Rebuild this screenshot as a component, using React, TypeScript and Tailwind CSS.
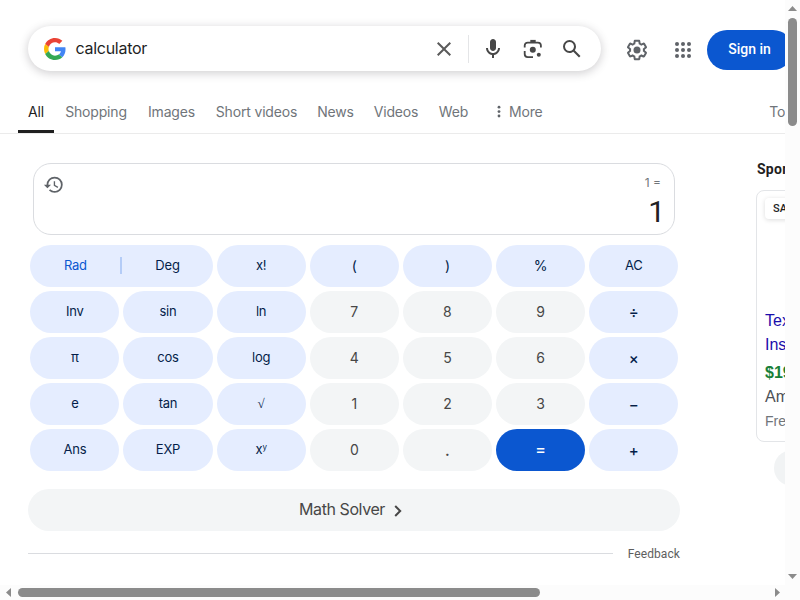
import type { ReactNode } from "react";

const GEAR =
  "M13.85 22.25h-3.7c-.74 0-1.36-.54-1.45-1.27l-.27-1.89c-.27-.14-.53-.29-.79-.46l-1.8.72c-.7.26-1.47-.03-1.81-.65L2.2 15.53c-.35-.66-.2-1.44.36-1.88l1.53-1.19c-.01-.15-.02-.3-.02-.46 0-.15.01-.31.02-.46l-1.52-1.19c-.59-.45-.74-1.26-.37-1.88l1.85-3.19c.34-.62 1.11-.9 1.79-.63l1.81.73c.26-.17.52-.32.78-.46l.27-1.91c.09-.7.71-1.25 1.44-1.25h3.7c.74 0 1.36.54 1.45 1.27l.27 1.89c.27.14.53.29.79.46l1.8-.72c.71-.26 1.48.03 1.82.65l1.84 3.18c.36.66.2 1.44-.36 1.88l-1.52 1.19c.01.15.02.3.02.46s-.01.31-.02.46l1.52 1.19c.56.45.72 1.23.37 1.86l-1.86 3.22c-.34.62-1.11.9-1.8.63l-1.8-.72c-.26.17-.52.32-.78.46l-.27 1.91c-.1.68-.72 1.22-1.46 1.22zm-3.23-2h2.76l.37-2.55.53-.22c.44-.18.88-.44 1.34-.78l.45-.34 2.38.96 1.38-2.4-2.03-1.58.07-.56c.03-.26.06-.51.06-.78s-.03-.53-.06-.78l-.07-.56 2.03-1.58-1.39-2.4-2.39.96-.45-.35c-.42-.32-.87-.58-1.33-.77l-.52-.22-.37-2.55h-2.76l-.37 2.55-.53.21c-.44.19-.88.44-1.34.79l-.45.33-2.38-.95-1.39 2.39 2.03 1.58-.07.56a7 7 0 0 0-.06.79c0 .26.02.53.06.78l.07.56-2.03 1.58 1.38 2.4 2.39-.96.45.35c.43.33.86.58 1.33.77l.53.22.38 2.55z";

function GoogleLogo() {
  return (
    <svg viewBox="0 0 48 48" className="ml-[15.5px] h-[22px] w-[22px] shrink-0">
      <path fill="#ea4335" d="M24 9.5c3.54 0 6.71 1.22 9.21 3.6l6.85-6.85C35.9 2.38 30.47 0 24 0 14.62 0 6.51 5.38 2.56 13.22l7.98 6.19C12.43 13.72 17.74 9.5 24 9.5z" />
      <path fill="#4285f4" d="M46.98 24.55c0-1.57-.15-3.09-.38-4.55H24v9.02h12.94c-.58 2.96-2.26 5.48-4.78 7.18l7.73 6c4.51-4.18 7.09-10.36 7.09-17.65z" />
      <path fill="#fbbc05" d="M10.53 28.59c-.48-1.45-.76-2.99-.76-4.59s.27-3.14.76-4.59l-7.98-6.19C.92 16.46 0 20.12 0 24c0 3.88.92 7.54 2.56 10.78l7.97-6.19z" />
      <path fill="#34a853" d="M24 48c6.48 0 11.93-2.13 15.89-5.81l-7.73-6c-2.15 1.45-4.92 2.3-8.16 2.3-6.26 0-11.57-4.22-13.47-9.91l-7.98 6.19C6.51 42.62 14.62 48 24 48z" />
    </svg>
  );
}

function SearchBar() {
  return (
    <div className="flex h-[45px] w-[573px] shrink-0 items-center rounded-full bg-white shadow-[0_2px_8px_1px_rgba(64,60,67,0.22)]">
      <GoogleLogo />
      <span className="ml-[10px] w-[356.5px] pb-[2px] text-[16px] tracking-[-0.28px] text-[#1f1f1f]">calculator</span>
      <svg viewBox="0 0 24 24" className="h-6 w-6 shrink-0 fill-[#5a5a5a]">
        <path d="M19 6.41L17.59 5 12 10.59 6.41 5 5 6.41 10.59 12 5 17.59 6.41 19 12 13.41 17.59 19 19 17.59 13.41 12z" />
      </svg>
      <div className="ml-3 h-7 w-px bg-[#e4e5e7]" />
      <svg viewBox="0 0 24 24" className="ml-[11.5px] h-6 w-6 shrink-0 fill-[#474747]">
        <path d="M12 14c1.66 0 3-1.34 3-3V5c0-1.66-1.34-3-3-3S9 3.34 9 5v6c0 1.66 1.34 3 3 3z" />
        <path d="M17 11c0 2.76-2.24 5-5 5s-5-2.24-5-5H5c0 3.53 2.61 6.43 6 6.92V21h2v-3.08c3.39-.49 6-3.39 6-6.92h-2z" />
      </svg>
      <svg viewBox="0 0 24 24" className="ml-4 h-6 w-6 shrink-0 fill-[#474747]">
        <path d="M9.3 2.9h5.4v2.4H9.3z" />
        <path
          d="M3.7 10.6V8.6a3 3 0 0 1 3-3h10.2a3 3 0 0 1 3 3v2M3.7 14v3.1a3 3 0 0 0 3 3H12"
          fill="none"
          stroke="#474747"
          strokeWidth="1.8"
        />
        <circle cx="11.8" cy="12.8" r="3" />
        <circle cx="17.8" cy="17.8" r="2" />
      </svg>
      <svg viewBox="0 0 24 24" className="ml-[15.5px] h-6 w-6 shrink-0 fill-[#474747]">
        <path d="M20.49 19l-5.73-5.73C15.53 12.2 16 10.91 16 9.5A6.5 6.5 0 1 0 9.5 16c1.41 0 2.7-.47 3.77-1.24L19 20.49 20.49 19zM5 9.5C5 7.01 7.01 5 9.5 5S14 7.01 14 9.5 11.99 14 9.5 14 5 11.99 5 9.5z" />
      </svg>
    </div>
  );
}

function Header() {
  return (
    <header className="flex h-[71px] items-start pt-[26px] pl-7">
      <SearchBar />
      <svg viewBox="0 0 24 24" className="mt-3 ml-6 h-6 w-6 shrink-0 fill-[#5f6368]">
        <path d={GEAR} />
        <circle cx="12" cy="12" r="3.5" />
      </svg>
      <svg viewBox="0 0 24 24" className="mt-3 ml-[22px] h-6 w-6 shrink-0 fill-[#5f6368]">
        {[6, 12, 18].map((y) => [6, 12, 18].map((x) => <circle key={x + "-" + y} cx={x} cy={y} r="2" />))}
      </svg>
      <button className="mt-1 ml-3 h-10 w-[86px] shrink-0 rounded-full bg-[#0b57d0] pr-[1px] pb-[2px] font-['Roboto',sans-serif] text-[14px] font-medium text-white">
        Sign in
      </button>
    </header>
  );
}

const tabs = [
  { label: "All", width: "w-9" },
  { label: "Shopping", width: "w-[83px]" },
  { label: "Images", width: "w-[68px]" },
  { label: "Short videos", width: "w-[102px]" },
  { label: "News", width: "w-[56px]" },
  { label: "Videos", width: "w-[65px]" },
  { label: "Web", width: "w-[50px]" },
];

function Tabs() {
  return (
    <nav className="flex h-[63px] border-b border-[#ebebeb] pl-[18px] text-[14px] tracking-[-0.17px] text-[#70757a]">
      {tabs.map((tab, i) => (
        <div
          key={tab.label}
          className={
            tab.width +
            " flex shrink-0 justify-center border-b-3 pt-[31px] leading-5 whitespace-nowrap " +
            (i === 0 ? "mr-[0.5px] border-[#1f1f1f] text-[#1f1f1f]" : "border-transparent")
          }
        >
          {tab.label}
        </div>
      ))}
      <div className="ml-[18.5px] flex pt-[31px] leading-5">
        <svg viewBox="0 0 4 14" className="mt-[3px] mr-2 h-[14px] w-1 fill-[#5f6368]">
          <circle cx="2" cy="2.2" r="1.4" />
          <circle cx="2" cy="6.6" r="1.4" />
          <circle cx="2" cy="11" r="1.4" />
        </svg>
        More
      </div>
      <div className="mr-[-19px] ml-auto pt-[31px] leading-5">Tools</div>
    </nav>
  );
}

function Display() {
  return (
    <div className="mr-[5px] ml-[5px] flex h-[72px] justify-between rounded-[18px] border border-[#dadce0]">
      <svg viewBox="0 0 24 24" className="mt-[9.5px] ml-[9px] h-[21.5px] w-[21.5px] fill-[#5f6368]">
        <path d="M13 3a9 9 0 0 0-9 9H1l3.89 3.89.07.14L9 12H6c0-3.87 3.13-7 7-7s7 3.13 7 7-3.13 7-7 7c-1.93 0-3.68-.79-4.94-2.06l-1.42 1.42A8.954 8.954 0 0 0 13 21a9 9 0 0 0 0-18zm-1 5v5l4.28 2.54.72-1.21-3.5-2.08V8H12z" />
      </svg>
      <div className="flex flex-col items-end pr-[13px]">
        <span className="mt-[11px] text-[12px] leading-4 text-[#70757a]">1 =</span>
        <span className="mt-[2px] mr-[-4px] font-['Roboto',sans-serif] text-[30px] leading-[38px] text-[#202124]">1</span>
      </div>
    </div>
  );
}

type Key = { label: ReactNode; kind: "fn" | "num" | "eq" | "op"; cls?: string };
const fn = (label: ReactNode, cls = "text-[13px] tracking-[-0.2px]"): Key => ({ label, kind: "fn", cls });
const op = (label: string): Key => ({ label, kind: "op", cls: "pt-[2px] text-[15px] font-medium" });
const num = (label: string): Key => ({ label, kind: "num", cls: "pb-[2px] text-[14px]" });

const keys: Key[] = [
  fn("x!"), fn("(", "text-[14px]"), fn(")", "text-[14px]"), fn("%", "text-[14px]"), fn("AC"),
  fn("Inv"), fn("sin"), fn("ln"), num("7"), num("8"), num("9"), op("÷"),
  fn("π"), fn("cos"), fn("log"), num("4"), num("5"), num("6"), op("×"),
  fn("e"), fn("tan"), fn("√", "text-[13px] font-['Liberation_Serif',serif]"), num("1"), num("2"), num("3"), op("−"),
  fn("Ans"), fn("EXP"),
  fn(<>x<span className="mb-[6px] text-[8px]">y</span></>),
  num("0"),
  { label: ".", kind: "num", cls: "pb-[2px] text-[18px]" },
  { label: "=", kind: "eq", cls: "pb-[2px] text-[16px] font-medium" },
  op("+"),
];

const tone = {
  fn: "bg-[#e5edff] pb-px text-[#041e49]",
  op: "bg-[#e5edff] text-[#041e49]",
  num: "bg-[#f3f5f6] text-[#474747]",
  eq: "bg-[#0b57d0] text-white",
};

function Keypad() {
  return (
    <div className="mt-[10px] mr-[1.7px] ml-[2.3px] grid auto-rows-[42px] grid-cols-7 gap-1">
      <div className="col-span-2 flex items-center rounded-full bg-[#e5edff] pb-px text-[13px] tracking-[-0.2px] text-[#041e49]">
        <span className="flex-1 text-center text-[#0b57d0]">Rad</span>
        <span className="h-[17px] w-[2px] bg-[#b4ccf7]" />
        <span className="flex-1 text-center">Deg</span>
      </div>
      {keys.map((key, i) => (
        <div key={i} className={"flex items-center justify-center rounded-full " + tone[key.kind] + " " + key.cls}>
          {key.label}
        </div>
      ))}
    </div>
  );
}

function Sponsored() {
  return (
    <aside className="ml-[77px] w-[200px] shrink-0 font-['Liberation_Sans',Arial,sans-serif]">
      <h2 className="mt-[-4px] font-['Roboto',sans-serif] text-[14px] leading-5 font-bold tracking-[0.25px] text-[#1f1f1f]">Sponsored</h2>
      <div className="mt-[11px] ml-[-1px] h-[252px] rounded-[8px] border border-[#e3e5e8] pl-[8px]">
        <div className="mt-[7px] h-[21px] w-[44px] rounded-[4px] bg-white pl-[8px] font-['Roboto',sans-serif] text-[11px] leading-[21px] font-medium text-[#1f1f1f] shadow-[0_1px_5px_rgba(0,0,0,0.14)]">
          SALE
        </div>
        <div className="mt-[90px] text-[16px] leading-6 text-[#1a0dab]">
          Texas
          <br />
          Instruments
        </div>
        <div className="mt-[4px] text-[16px] leading-6 font-bold text-[#188038]">$19.99</div>
        <div className="text-[16px] leading-6 text-[#4d5156]">Amazon</div>
        <div className="mt-[1px] text-[14px] leading-[22px] text-[#70757a]">Free shipping</div>
      </div>
      <div className="mt-[8px] ml-[17px] h-9 w-[140px] rounded-full bg-[#f1f3f4]" />
    </aside>
  );
}

function Scrollbars() {
  return (
    <>
      <div className="col-start-2 row-start-1 flex flex-col items-center bg-[#fcfcfc]">
        <svg viewBox="0 0 9 5" className="mt-[6px] h-[5px] w-[9px] fill-[#8b8b8b]">
          <path d="M0 5L4.5 0 9 5z" />
        </svg>
        <div className="mt-[7px] h-[108px] w-[9px] rounded-full bg-[#8b8b8b]" />
        <svg viewBox="0 0 9 5" className="mt-auto mb-[6px] h-[5px] w-[9px] fill-[#8b8b8b]">
          <path d="M0 0L4.5 5 9 0z" />
        </svg>
      </div>
      <div className="col-start-1 row-start-2 flex items-center bg-[#fcfcfc]">
        <svg viewBox="0 0 5 9" className="ml-[6px] h-[9px] w-[5px] fill-[#8b8b8b]">
          <path d="M5 0L0 4.5 5 9z" />
        </svg>
        <div className="ml-[7px] h-[9px] w-[522px] rounded-full bg-[#8b8b8b]" />
        <svg viewBox="0 0 5 9" className="mr-[5px] ml-auto h-[9px] w-[5px] fill-[#8b8b8b]">
          <path d="M0 0L5 4.5 0 9z" />
        </svg>
      </div>
      <div className="col-start-2 row-start-2 bg-[#fcfcfc]" />
    </>
  );
}

export default function App() {
  return (
    <div className="grid h-[600px] w-[800px] grid-cols-[785px_15px] grid-rows-[585px_15px] overflow-hidden bg-white font-['Inter',sans-serif]">
      <div className="overflow-hidden">
        <Header />
        <Tabs />
        <div className="flex pt-[29px] pl-7">
          <main className="w-[652px] shrink-0">
            <Display />
            <Keypad />
            <div className="mt-[18px] flex h-[42px] items-center justify-center rounded-full bg-[#f3f5f6] pr-[7px] pb-[2px] text-[16px] tracking-[-0.42px] text-[#474747]">
              Math Solver
              <svg viewBox="0 0 8 12" className="mt-[4px] ml-[9px] h-3 w-2">
                <path d="M1.2 1L6.2 6l-5 5" fill="none" stroke="#474747" strokeWidth="2" />
              </svg>
            </div>
            <div className="mt-[13.5px] flex items-center font-['Roboto',sans-serif] text-[12px] leading-[18px] tracking-[0.08px] text-[#5e5e5e]">
              <div className="mr-[15px] h-px flex-1 bg-[#dadce0]" />
              Feedback
            </div>
          </main>
          <Sponsored />
        </div>
      </div>
      <Scrollbars />
    </div>
  );
}
